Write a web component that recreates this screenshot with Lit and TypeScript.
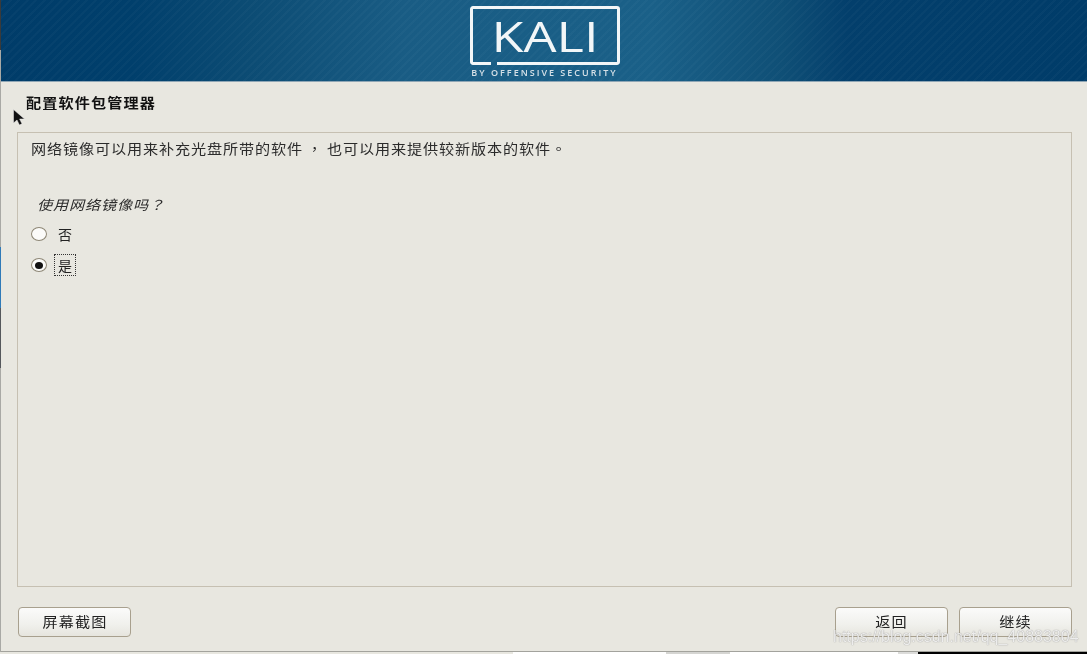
import { LitElement, html, css } from "lit";
import { customElement } from "lit/decorators.js";

@customElement("app-root")
export class AppRoot extends LitElement {
  static styles = css`
    :host {
      display: block;
      width: 1087px;
      height: 654px;
      overflow: hidden;
      position: relative;
      background: linear-gradient(180deg, #3a3a3a 0 50px, #a9a9a5 50px 247px, #2f7ab8 247px 308px, #55585c 308px 368px, #a9a9a5 368px);
      font-family: "Noto Sans CJK SC", "DejaVu Sans", sans-serif;
      color: #2a2a2a;
    }
    .win {
      margin-left: 1px;
      height: 652px;
      box-sizing: border-box;
      display: flex;
      flex-direction: column;
      background: #e8e7e0;
      border-bottom: 1px solid #a3a39d;
    }
    .banner {
      height: 82px;
      flex: none;
      box-sizing: border-box;
      display: flex;
      justify-content: center;
      border-bottom: 1px solid #8fa6b5;
      background:
        repeating-linear-gradient(135deg, rgba(255,255,255,0.025) 0 2px, rgba(255,255,255,0) 2px 6px),
        linear-gradient(90deg, #003c69 0%, #003f6c 12%, #0c4c74 23%, #195c84 37%, #1a6088 60%, #0f4f76 72%, #033f6c 78%, #003c69 100%);
    }
    .logo {
      width: 150px;
      margin-left: 1px;
      padding-top: 6px;
      display: flex;
      flex-direction: column;
      align-items: stretch;
      filter: blur(0.4px);
    }
    .logo svg { display: block; }
    .by {
      font-family: "Open Sans", "DejaVu Sans", sans-serif;
      font-size: 9px;
      font-weight: 600;
      letter-spacing: 2px;
      line-height: 10px;
      margin-top: 3px;
      white-space: nowrap;
      text-align: center;
      color: #d5e0e7;
    }
    .kali {
      font-family: "Open Sans", sans-serif;
      font-weight: 500;
    }
    .main {
      flex: 1;
      display: flex;
      flex-direction: column;
      padding: 0 15px 15px 16px;
      min-height: 0;
    }
    .t { filter: blur(0.35px); }
    .wide { transform: scaleX(1.12); transform-origin: left center; }
    h1 {
      margin: 10px 0 0 9px;
      font-size: 13.500px;
      line-height: 20px;
      font-weight: 700;
      color: #111;
      letter-spacing: 1px;
      white-space: nowrap;
    }
    .box {
      margin-top: 20px;
      height: 455px;
      flex: none;
      box-sizing: border-box;
      border: 1px solid #c6c0b2;
      padding: 5px 13px;
    }
    .desc { font-size: 13.500px; line-height: 20px; letter-spacing: 0.79px; color: #2b2b2b; white-space: nowrap; }
    .p { font-family: "Noto Sans CJK TC", sans-serif; }
    .comma { margin: 0 3.500px; }
    .q {
      margin: 36px 0 0 6px;
      font-size: 13.500px;
      line-height: 20px;
      font-style: italic;
      color: #2b2b2b;
      letter-spacing: 0.79px;
      white-space: nowrap;
    }
    .opts { margin-top: 9px; display: flex; flex-direction: column; gap: 9px; }
    .opt { display: flex; align-items: center; height: 22px; gap: 7px; font-size: 14px; color: #222; }
    .radio {
      width: 16px; height: 14px; flex: none;
      box-sizing: border-box;
      border-radius: 50%;
      border: 1px solid #8e8776;
      background: #fbfbf9;
      display: flex; align-items: center; justify-content: center;
    }
    .radio i { width: 8px; height: 7px; border-radius: 50%; background: #111; display: block; }
    .label { padding: 0 3px; line-height: 20px; border: 1px solid transparent; }
    .label.focus { border: 1px dotted #333; }
    .foot { margin-top: 20px; display: flex; justify-content: space-between; padding-left: 1px; }
    .right { display: flex; gap: 11px; }
    .btn {
      width: 113px; height: 30px;
      box-sizing: border-box;
      border: 1px solid #a8a08e;
      border-radius: 4px;
      background: linear-gradient(180deg, #fbfbfa 0%, #f0f0ec 60%, #e6e5de 100%);
      font-family: inherit;
      font-size: 13.500px;
      color: #222;
      padding: 0 0 3px 0;
      letter-spacing: 1px;
    }
    .btn span { display: inline-block; transform: scaleX(1.12); filter: blur(0.3px); }
    .cursor { position: absolute; left: 13px; top: 109px; }
    .wm {
      position: absolute; left: 833px; top: 628px;
      font-family: "Liberation Sans", sans-serif;
      font-size: 16px; color: rgba(255,255,255,0.85);
      text-shadow: 0 0 1px rgba(90,90,90,0.8);
      white-space: nowrap;
      filter: blur(0.3px);
    }
    .strip {
      position: absolute; left: 0; right: 0; top: 652px; height: 2px;
      background: linear-gradient(90deg, #e8e7e0 0 513px, #fff 513px 666px, #d5d5d2 666px 730px, #fff 730px 898px, #dcdcda 898px 918px, #000 918px);
    }
  `;

  render() {
    return html`
      <div class="win">
        <div class="banner">
          <div class="logo">
            <svg width="150" height="59" viewBox="0 0 150 59" fill="none">
              <path d="M21 57.500H3a1.500 1.500 0 0 1-1.500-1.500V3A1.500 1.500 0 0 1 3 1.500h144a1.500 1.500 0 0 1 1.500 1.500v53a1.500 1.500 0 0 1-1.500 1.500H27" stroke="#f2f6f8" stroke-width="3"/>
              <text class="kali" x="21.500" y="46" fill="#f2f6f8" font-size="42" textLength="107" lengthAdjust="spacingAndGlyphs">KALI</text>
            </svg>
            <div class="by">BY OFFENSIVE SECURITY</div>
          </div>
        </div>
        <div class="main">
          <h1 class="t wide">配置软件包管理器</h1>
          <div class="box">
            <div class="desc t wide">网络镜像可以用来补充光盘所带的软件<span class="p comma">，</span>也可以用来提供较新版本的软件<span class="p">。</span></div>
            <div class="q t wide">使用网络镜像吗<span class="p">？</span></div>
            <div class="opts">
              <div class="opt t"><span class="radio"></span><span class="label">否</span></div>
              <div class="opt t"><span class="radio"><i></i></span><span class="label focus">是</span></div>
            </div>
          </div>
          <div class="foot">
            <button class="btn"><span>屏幕截图</span></button>
            <div class="right">
              <button class="btn"><span>返回</span></button>
              <button class="btn"><span>继续</span></button>
            </div>
          </div>
        </div>
      </div>
      <div class="strip"></div>
      <svg class="cursor" width="13" height="17" viewBox="0 0 13 17">
        <path d="M0.500 0.500V14L4 11l2.400 5 2.600-1.200-2.400-4.800H11.500z" fill="#111" stroke="#eee" stroke-width="0.500"/>
      </svg>
      <div class="wm">https://blog.csdn.net/qq_40883804</div>
    `;
  }
}
